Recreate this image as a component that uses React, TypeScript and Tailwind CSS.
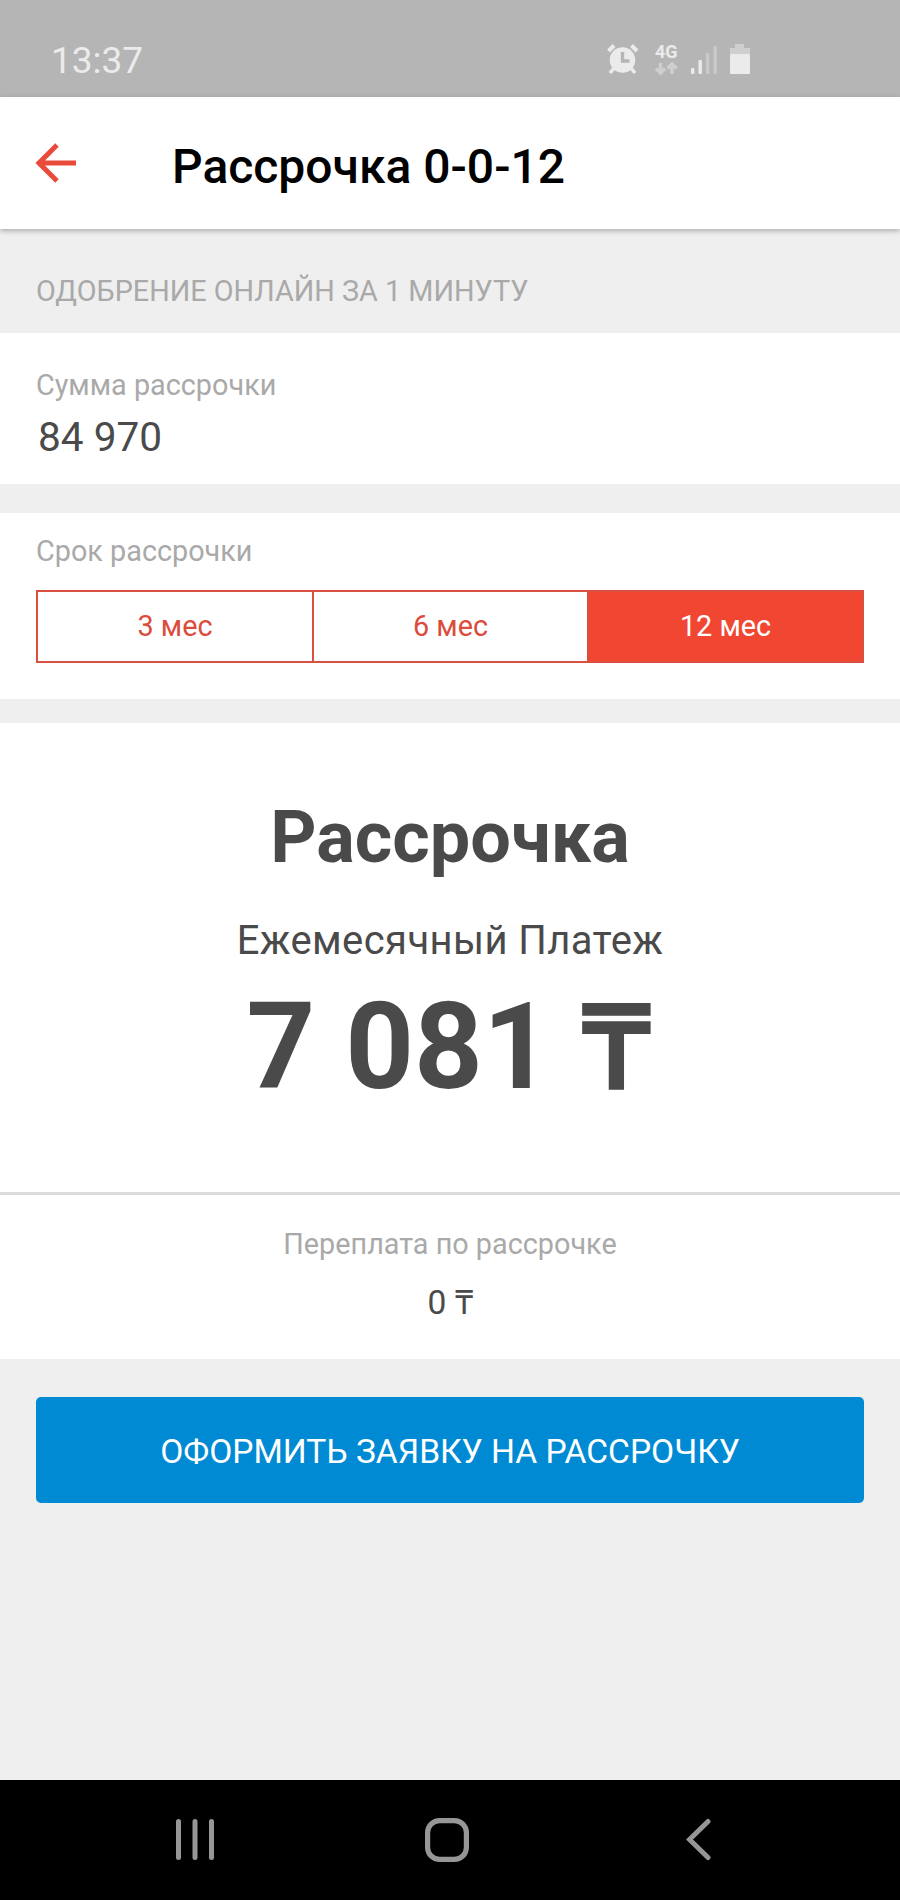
import { useState } from "react";

const terms = [
  { months: 3, label: "3 мес" },
  { months: 6, label: "6 мес" },
  { months: 12, label: "12 мес" },
];

function StatusBar() {
  return (
    <div className="flex h-[97px] items-center justify-between bg-[#b5b5b5] pt-[23px] pl-[51px] pr-[150px]">
      <span className="mt-[2px] text-[37px] leading-[40px] text-[#ebebeb]">13:37</span>
      <svg width="144" height="46" viewBox="0 -6 144 46" className="-mt-[1px] fill-[#ebebeb]">
        {/* Alarm */}
        <circle cx="16.5" cy="17" r="12.8" />
        <path d="M2.5 8 8 2.5M25.5 2.5 31 8" stroke="#ebebeb" strokeWidth="4" />
        <path d="M8 25 4 30M25 25l4 5" stroke="#ebebeb" strokeWidth="3.6" />
        <path d="M16.5 9v9h7" fill="none" stroke="#b5b5b5" strokeWidth="3.4" />
        {/* Network */}
        <text x="49" y="14.5" className="text-[18px] font-bold">
          4G
        </text>
        <path
          d="M54.5 20v9M50 25.5l4.5 4.5 4.5-4.5M66 31v-9M61.5 25.5l4.5-4.5 4.5 4.5"
          fill="none"
          stroke="#cfcfcf"
          strokeWidth="3.4"
        />
        {/* Signal */}
        <rect x="85" y="25" width="3.4" height="6" rx="1" />
        <rect x="92.5" y="17" width="3.4" height="14" rx="1" />
        <rect x="100" y="10" width="3.4" height="21" rx="1" fill="#c9c9c9" />
        <rect x="107.5" y="3" width="3.4" height="28" rx="1" fill="#c9c9c9" />
        {/* Battery */}
        <path d="M129 1h9v4h6v6h-20V5h5z" fill="#cfcfcf" />
        <rect x="124" y="11" width="20" height="20" rx="1" />
      </svg>
    </div>
  );
}

function Header() {
  return (
    <header className="relative flex h-[132px] items-center bg-white pl-[35px] shadow-[0_2px_5px_rgba(0,0,0,0.28)]">
      <button type="button" aria-label="Назад">
        <svg width="41" height="40" viewBox="0 0 41 40" fill="none" stroke="#e94b3b" strokeWidth="5">
          <path d="M41 20H4M22 2 4 20l18 18" />
        </svg>
      </button>
      <h1 className="mt-[7px] ml-[96px] text-[48px] leading-[56px] font-medium text-black">
        Рассрочка 0-0-12
      </h1>
    </header>
  );
}

function NavBar() {
  return (
    <nav className="flex h-[120px] items-center bg-black pl-[175px]">
      <svg width="40" height="44" viewBox="0 0 40 44" stroke="#969696" strokeWidth="5" strokeLinecap="round">
        <path d="M3.5 3.5v36M20 3.5v36M36.5 3.5v36" />
      </svg>
      <svg width="44" height="44" viewBox="0 0 44 44" fill="none" stroke="#969696" strokeWidth="5.2" className="ml-[210px]">
        <rect x="2.6" y="2.6" width="38.8" height="38.8" rx="12" />
      </svg>
      <svg width="26" height="44" viewBox="0 0 26 44" fill="none" stroke="#969696" strokeWidth="5" strokeLinecap="round" className="ml-[217px]">
        <path d="M22 3.5 3.5 21.5l18.5 18" />
      </svg>
    </nav>
  );
}

export default function App() {
  const [term, setTerm] = useState(12);

  return (
    <div className="flex h-[1900px] w-[900px] flex-col overflow-hidden bg-[#efefef] font-['Roboto',sans-serif] text-[#4a4a4a]">
      <StatusBar />
      <Header />

      <main className="flex-1">
        <div className="flex h-[104px] items-center px-9 pt-[22px] text-[28.8px] text-[#a9a9a9]">
          ОДОБРЕНИЕ ОНЛАЙН ЗА 1 МИНУТУ
        </div>

        {/* Сумма */}
        <section className="h-[151px] bg-white px-9 pt-[34px]">
          <p className="text-[28.8px] leading-[36px] text-[#a9a9a9]">Сумма рассрочки</p>
          <p className="mt-[12px] pl-[2px] text-[40.6px] leading-[44px]">84 970</p>
        </section>

        {/* Срок */}
        <section className="mt-[29px] h-[186px] bg-white px-9 pt-5">
          <p className="text-[28.8px] leading-[36px] text-[#a9a9a9]">Срок рассрочки</p>
          <div className="mt-[21px] grid h-[73px] grid-cols-[276px_275px_1fr] divide-x-2 divide-[#d9503f] border-2 border-[#d9503f]">
            {terms.map(({ months, label }) => (
              <button
                key={months}
                type="button"
                onClick={() => setTerm(months)}
                className={`pb-[1px] text-[28.8px] leading-[36px] ${
                  term === months ? "bg-[#f04632] text-white" : "bg-white text-[#dc4c3c]"
                }`}
              >
                {label}
              </button>
            ))}
          </div>
        </section>

        {/* Платеж */}
        <section className="mt-6 bg-white text-center">
          <div className="h-[472px] border-b-3 border-[#dcdcdc] pt-[75px]">
            <h2 className="text-[72px] leading-[80px] font-bold">Рассрочка</h2>
            <p className="mt-[39px] text-[40px] leading-[48px] tracking-[0.4px]">Ежемесячный Платеж</p>
            <p className="mt-[22px] pr-[4px] text-[120px] leading-[120px] font-bold">
              7 081{" "}
              <span className="ml-[2px] inline-block origin-[50%_84%] scale-x-[1.05] scale-y-[0.97]">₸</span>
            </p>
          </div>
          <div className="h-[164px] pt-[31px]">
            <p className="text-[28.8px] leading-[36px] text-[#a9a9a9]">Переплата по рассрочке</p>
            <p className="mt-[21px] text-[33.5px] leading-[40px]">0 ₸</p>
          </div>
        </section>

        <div className="px-9 pt-[38px]">
          <button
            type="button"
            className="h-[106px] w-full rounded-[5px] bg-[#008ad4] pt-[5px] text-[33.6px] text-white"
          >
            ОФОРМИТЬ ЗАЯВКУ НА РАССРОЧКУ
          </button>
        </div>
      </main>

      <NavBar />
    </div>
  );
}
